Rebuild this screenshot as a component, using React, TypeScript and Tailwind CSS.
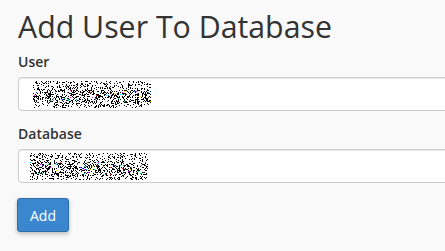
import React from 'react'

// redacted field contents are shown as a block of pixel noise
function Noise({ seed, width, height }: { seed: number; width: number; height: number }) {
  let s = seed
  const rand = () => {
    s = (s * 1103515245 + 12345) & 0x7fffffff
    return s / 0x7fffffff
  }
  const colors = ['#ff00ff', '#00c8ff', '#ffd400', '#ff2a2a', '#2a3cff', '#00d060']
  const dots: React.ReactNode[] = []
  for (let y = 0; y < height; y++) {
    for (let x = 0; x < width; x++) {
      const mid = y > height * 0.3 && y < height * 0.8
      const r = rand()
      if (r < (mid ? 0.36 : 0.22)) {
        const c = mid && rand() < 0.1 ? colors[Math.floor(rand() * colors.length)] : '#000'
        dots.push(<rect key={`${x}-${y}`} x={x} y={y} width={1} height={1} fill={c} />)
      }
    }
  }
  return (
    <svg width={width} height={height} viewBox={`0 0 ${width} ${height}`} shapeRendering="crispEdges">
      {dots}
    </svg>
  )
}

function Field({ label, seed, noiseLeft, className }: { label: string; seed: number; noiseLeft: string; className: string }) {
  return (
    <div className={className}>
      <label className="block h-5 text-[14px] leading-5 font-semibold text-[#333]">{label}</label>
      <div className="mt-[5px] flex h-[34px] w-[460px] items-center rounded-[4px] border border-[#ccc] bg-white shadow-[inset_0_1px_1px_rgba(0,0,0,0.075)]">
        <div className={noiseLeft}>
          <Noise seed={seed} width={118} height={27} />
        </div>
      </div>
    </div>
  )
}

export default function App() {
  return (
    <div className="h-[251px] w-[445px] overflow-hidden bg-[#f9f9f9] pl-[17px] pt-[10px] font-['Open_Sans',sans-serif]">
      <h1 className="pl-px text-[30.3px] leading-[33px] font-normal text-[#333]">Add User To Database</h1>
      <Field label="User" seed={17} noiseLeft="ml-[14px]" className="mt-[9px] pl-px" />
      <Field label="Database" seed={91} noiseLeft="ml-[11px]" className="mt-[13px] pl-px" />
      <button className="mt-[15px] h-[34px] w-[52px] rounded-[3px] border border-[#2e6da4] bg-[#3a87cf] text-[14px] text-white shadow-[0_2px_4px_rgba(0,0,0,0.25)]">
        Add
      </button>
    </div>
  )
}
